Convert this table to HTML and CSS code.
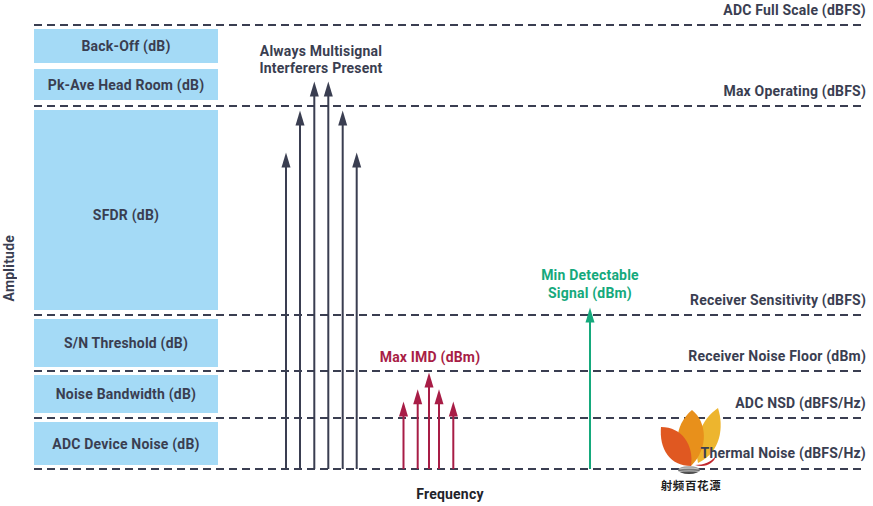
FILE: index.html
```html
<!DOCTYPE html>
<html lang="en">
<head>
<meta charset="utf-8">
<title>Receiver dynamic range</title>
<link rel="stylesheet" href="styles.css">
</head>
<body>
<div class="page">
  <div class="axis"><span class="axis-label">Amplitude</span></div>
  <div class="main">
    <div class="chart">
      <div class="band band-0">
        <span class="level">ADC Full Scale (dBFS)</span>
      </div>
      <div class="rule"></div>
      <div class="band band-1">
        <div class="stack">
          <div class="box box-backoff">Back-Off (dB)</div>
          <div class="box box-headroom">Pk-Ave Head Room (dB)</div>
        </div>
        <span class="level">Max Operating (dBFS)</span>
      </div>
      <div class="rule"></div>
      <div class="band band-2">
        <div class="stack">
          <div class="box box-sfdr">SFDR (dB)</div>
        </div>
        <span class="level">Receiver Sensitivity (dBFS)</span>
      </div>
      <div class="rule"></div>
      <div class="band band-3">
        <div class="stack">
          <div class="box box-sn">S/N Threshold (dB)</div>
        </div>
        <span class="level">Receiver Noise Floor (dBm)</span>
      </div>
      <div class="rule"></div>
      <div class="band band-4">
        <div class="stack">
          <div class="box box-nbw">Noise Bandwidth (dB)</div>
        </div>
        <span class="level">ADC NSD (dBFS/Hz)</span>
      </div>
      <div class="rule"></div>
      <div class="band band-5">
        <div class="stack">
          <div class="box box-adc">ADC Device Noise (dB)</div>
        </div>
        <span class="level level-last">Thermal Noise (dBFS/Hz)</span>
      </div>
      <div class="rule"></div>
    </div>
    <div class="freq">Frequency</div>
  </div>

  <svg class="arrows" width="873" height="506" viewBox="0 0 873 506" aria-hidden="true">
    <g class="dark">
      <line x1="286" y1="164" x2="286" y2="469"/><polygon points="286,152.5 281.5,167.5 290.5,167.5"/>
      <line x1="300" y1="122" x2="300" y2="469"/><polygon points="300,110.5 295.5,125.5 304.5,125.5"/>
      <line x1="314.3" y1="93" x2="314.3" y2="469"/><polygon points="314.3,81.5 309.8,96.5 318.8,96.5"/>
      <line x1="328.3" y1="93" x2="328.3" y2="469"/><polygon points="328.3,81.5 323.8,96.5 332.8,96.5"/>
      <line x1="342.7" y1="122" x2="342.7" y2="469"/><polygon points="342.7,110.5 338.2,125.5 347.2,125.5"/>
      <line x1="356.7" y1="164" x2="356.7" y2="469"/><polygon points="356.7,152.5 352.2,167.5 361.2,167.5"/>
    </g>
    <g class="red">
      <line x1="403.5" y1="413" x2="403.5" y2="469"/><polygon points="403.5,401.5 399,416.5 408,416.5"/>
      <line x1="417.7" y1="401" x2="417.7" y2="469"/><polygon points="417.7,389.3 413.2,404.3 422.2,404.3"/>
      <line x1="429" y1="384" x2="429" y2="469"/><polygon points="429,372.5 424.5,387.5 433.5,387.5"/>
      <line x1="439" y1="401" x2="439" y2="469"/><polygon points="439,389.3 434.5,404.3 443.5,404.3"/>
      <line x1="453.3" y1="413" x2="453.3" y2="469"/><polygon points="453.3,401.5 448.8,416.5 457.8,416.5"/>
    </g>
    <g class="green">
      <line x1="590" y1="319" x2="590" y2="469"/><polygon points="590,307.5 585.5,322.5 594.5,322.5"/>
    </g>
  </svg>

  <div class="note note-multi">Always Multisignal<br>Interferers Present</div>
  <div class="note note-imd">Max IMD (dBm)</div>
  <div class="note note-mds">Min Detectable<br>Signal (dBm)</div>

  <div class="logo">
    <svg class="logo-mark" width="62" height="70" viewBox="0 0 62 70" aria-hidden="true">
      <defs>
        <linearGradient id="disk" x1="0" y1="0" x2="0" y2="1">
          <stop offset="0" stop-color="#b8b8b8"/>
          <stop offset="0.5" stop-color="#707070"/>
          <stop offset="1" stop-color="#3c3c3c"/>
        </linearGradient>
      </defs>
      <path class="petal-yellow" d="M58,3 C64,22 61,47 38,58 C33,34 42,14 58,3 Z"/>
      <path class="petal-orange" d="M32,5 C47,17 49,43 31,61 C13,47 13,21 32,5 Z"/>
      <path class="petal-red" d="M1,22 C22,22 34,40 31,61 C10,61 -1,44 1,22 Z"/>
      <path class="swoosh" d="M35,60 C44,60 51,57 56,51 C54,58 46,63 35,60 Z"/>
      <ellipse cx="29" cy="65" rx="11" ry="4" fill="url(#disk)"/>
      <path class="disk-line" d="M19.5,64 C25,62.8 33,62.8 38.5,64 M19,66.5 C25,65.7 33,65.7 39,66.5"/>
    </svg>
    <div class="logo-text">射频百花潭</div>
  </div>
</div>
</body>
</html>
```
FILE: styles.css
```css
* { box-sizing: border-box; }
html, body { margin: 0; padding: 0; background: #ffffff; }
body {
  font-family: Roboto, "Liberation Sans", Arial, sans-serif;
  font-weight: 700;
  font-size: 14px;
  letter-spacing: 0.2px;
  color: #3a3e51;
}
.page {
  position: relative;
  width: 873px;
  height: 506px;
  display: flex;
  overflow: hidden;
}
.axis {
  width: 34px;
  padding-top: 235px;
  padding-left: 1px;
}
.axis-label {
  display: block;
  writing-mode: vertical-rl;
  transform: rotate(180deg);
  line-height: 16px;
}
.main {
  width: 832px;
  display: flex;
  flex-direction: column;
}
.chart { display: flex; flex-direction: column; }
.band {
  display: flex;
  align-items: flex-start;
}
.band-0 { height: 24px; }
.band-1 { height: 79px; }
.band-2 { height: 207px; }
.band-3 { height: 54px; }
.band-4 { height: 45px; }
.band-5 { height: 49px; }
.rule {
  height: 2px;
  background: repeating-linear-gradient(to right, #3a3e51 0 8px, transparent 8px 13px);
}
.stack {
  width: 184px;
  padding-top: 3px;
  display: flex;
  flex-direction: column;
  gap: 6px;
}
.box {
  background: #a4daf6;
  display: flex;
  align-items: center;
  justify-content: center;
  line-height: 16px;
}
.box-backoff { height: 34px; }
.box-headroom { height: 31px; }
.box-sfdr { height: 200px; padding-top: 10px; }
.box-sn { height: 48px; }
.box-nbw { height: 38px; }
.box-adc { height: 43px; }
.level {
  margin-left: auto;
  align-self: flex-end;
  line-height: 16px;
  margin-bottom: 6px;
  position: relative;
  z-index: 1;
}
.level-last { margin-bottom: 7px; }
.freq {
  margin-top: 16px;
  text-align: center;
  line-height: 16px;
  color: #22232a;
}
.arrows {
  position: absolute;
  left: 0;
  top: 0;
  pointer-events: none;
}
.arrows line { stroke-width: 2; }
.dark line { stroke: #3a3e51; }
.dark polygon { fill: #3a3e51; }
.red line { stroke: #a81d46; }
.red polygon { fill: #a81d46; }
.green line { stroke: #15a97c; }
.green polygon { fill: #15a97c; }
.note {
  position: absolute;
  text-align: center;
  line-height: 17px;
}
.note-multi { left: 221px; top: 43px; width: 200px; }
.note-imd { left: 370px; top: 349px; width: 120px; color: #a81d46; line-height: 16px; }
.note-mds { left: 530px; top: 266px; width: 120px; color: #15a97c; line-height: 18px; }
.logo {
  position: absolute;
  left: 660px;
  top: 405px;
  width: 62px;
  display: flex;
  flex-direction: column;
  align-items: center;
}
.logo-mark { display: block; overflow: visible; }
.petal-yellow { fill: #edb52e; }
.petal-orange { fill: #e8901b; }
.petal-red { fill: #e05821; }
.swoosh { fill: #c1272d; }
.disk-line { fill: none; stroke: #d8d8d8; stroke-width: 0.8; }
.logo-text {
  font-family: "Noto Sans CJK SC", sans-serif;
  font-size: 11.5px;
  font-weight: 700;
  line-height: 14px;
  color: #1d1d1d;
  letter-spacing: 0.6px;
  margin-top: 3px;
}
```
